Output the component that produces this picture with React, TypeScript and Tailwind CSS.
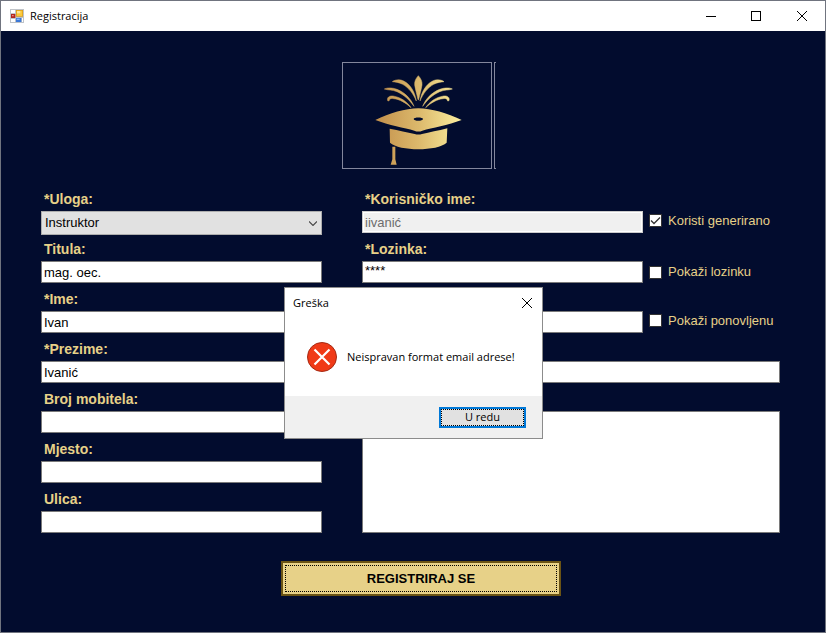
import { useState, type ReactNode } from "react";

const fieldClass =
  "block h-[22px] w-full rounded-none border border-[#7a7a7a] bg-white px-0.5 text-[13px] leading-4 text-black outline-none";

function Field({ id, label, children }: { id: string; label?: string; children: ReactNode }) {
  return (
    <div className="min-h-[50px]">
      <div className="h-5 pl-[3px]">
        {label && (
          <label htmlFor={id} className="block text-[14px] leading-4 font-bold text-[#e7d188]">
            {label}
          </label>
        )}
      </div>
      {children}
    </div>
  );
}

function Check({ id, label, initial = false }: { id: string; label: string; initial?: boolean }) {
  const [on, setOn] = useState(initial);
  return (
    <label htmlFor={id} className="flex flex-1 items-center gap-1.5 text-[13px] leading-4 whitespace-nowrap text-[#e7d188]">
      <span className="grid size-[13px] shrink-0">
        <input
          id={id}
          type="checkbox"
          checked={on}
          onChange={(e) => setOn(e.target.checked)}
          className="col-start-1 row-start-1 size-[13px] appearance-none border border-[#333333] bg-white"
        />
        {on && (
          <svg viewBox="0 0 13 13" className="pointer-events-none col-start-1 row-start-1 size-[13px]" fill="none" stroke="#333" strokeWidth="1.3">
            <path d="M2 6.5 5 9.5 11 3.5" />
          </svg>
        )}
      </span>
      {label}
    </label>
  );
}

function AppIcon() {
  return (
    <svg viewBox="0 0 42 42" className="size-3.5">
      <path d="M0 0h42v42H0z" fill="#bfc3c8" />
      <path d="M3 3h12v9H3zM3 30h12v9H3zM39 27v12h-3V27z" fill="#fff" />
      <path d="M3 15h13v12H3z" fill="#b3261e" />
      <path d="M6 18h5v4H6z" fill="#ef8a80" />
      <path d="M18 3h21v20H18z" fill="#d99a13" />
      <path d="M20 5h17v16H20z" fill="#fbc93b" />
      <path d="M21 6h10v7H21z" fill="#fde595" />
      <path d="M18 27h16v12H18z" fill="#3b78d8" />
      <path d="M20 29h9v4h-9z" fill="#8db8f5" />
    </svg>
  );
}

function Logo() {
  return (
    <svg viewBox="25 25 444 315" className="block h-[105px] w-[148px]" aria-label="Logo">
      <defs>
        <linearGradient id="gold" gradientUnits="userSpaceOnUse" x1="130" y1="0" x2="375" y2="0">
          <stop offset="0" stopColor="#c4924d" />
          <stop offset="0.5" stopColor="#dcb96c" />
          <stop offset="1" stopColor="#f9eb9c" />
        </linearGradient>
      </defs>
      <g fill="url(#gold)">
        <g stroke="url(#gold)" strokeWidth="1.5" strokeLinejoin="round">
          <path d="M251 63C243 72 239 80 240 91C242 106 247 119 250 135L252 135C255 119 260 106 262 91C263 80 259 72 251 63Z" />
          <path d="M173 81C181 75 195 73 207 79C229 90 241 114 245 139C236 117 222 99 204 89C193 83 181 82 173 81Z" />
          <path d="M328 81C320 75 306 73 294 79C272 90 260 114 256 139C265 117 279 99 297 89C308 83 320 82 328 81Z" />
          <path d="M149 103C158 98 174 99 187 104C211 114 229 132 238 155C225 136 208 120 187 111C173 105 160 107 149 103Z" />
          <path d="M353 103C344 98 328 99 315 104C291 114 273 132 264 155C277 136 294 120 315 111C329 105 342 107 353 103Z" />
          <path d="M159 138C156 128 164 123 175 124C199 128 217 141 229 159C213 144 195 134 177 132C166 130 165 134 163 139Z" />
          <path d="M343 138C346 128 338 123 327 124C303 128 285 141 273 159C289 144 307 134 325 132C336 130 337 134 339 139Z" />
        </g>
        <path
          fillRule="evenodd"
          d="M122 196C165 176 212 161 251 161C290 161 337 176 381 196C340 212 292 219 263 228Q251 233 239 228C210 219 162 212 122 196ZM237 193C237 200 265 200 265 193C265 187 237 187 237 193Z"
        />
        <path d="M165 222C193 227 217 233 240 238Q251 241 262 238C285 233 310 228 338 221L336 264C308 290 194 290 166 264Z" />
        <path d="M173 276H182V314L186 330H168L173 314Z" />
      </g>
    </svg>
  );
}

function CloseGlyph({ className }: { className: string }) {
  return (
    <svg viewBox="0 0 10 10" className={className} fill="none" stroke="#000" strokeWidth="1">
      <path d="M0 0 10 10M10 0 0 10" />
    </svg>
  );
}

function TitleBar() {
  return (
    <header className="flex h-[30px] items-center bg-white pl-[9px] text-black">
      <AppIcon />
      <h1 className="flex-1 pl-1.5 font-['Open_Sans','Noto_Sans',sans-serif] text-[11px] leading-4">Registracija</h1>
      <button type="button" aria-label="Minimiziraj" className="grid h-full w-11 place-items-center">
        <span className="h-px w-2.5 bg-black" />
      </button>
      <button type="button" aria-label="Maksimiziraj" className="grid h-full w-[46px] place-items-center">
        <span className="size-2.5 border border-black" />
      </button>
      <button type="button" aria-label="Zatvori" className="grid h-full w-[46px] place-items-center">
        <CloseGlyph className="size-2.5" />
      </button>
    </header>
  );
}

function ErrorDialog({ onClose }: { onClose: () => void }) {
  return (
    <div
      role="alertdialog"
      aria-labelledby="dialog-title"
      aria-describedby="dialog-text"
      className="absolute top-[286px] left-[283px] flex h-[152px] w-[259px] flex-col border border-[#8c8c8c] bg-white font-['Open_Sans','Noto_Sans',sans-serif] text-[11px] leading-4 text-black"
    >
      <div className="flex h-[30px] items-center justify-between pr-2.5 pl-2">
        <h2 id="dialog-title">Greška</h2>
        <button type="button" aria-label="Zatvori" onClick={onClose}>
          <CloseGlyph className="size-2.5" />
        </button>
      </div>
      <div className="flex flex-1 items-center gap-2.5 pl-[22px]">
        <svg viewBox="0 0 30 30" className="size-[30px]">
          <circle cx="15" cy="15" r="14.5" fill="#f03a17" stroke="#a52a14" />
          <path d="M7.5 7.5l15 15M22.5 7.5l-15 15" stroke="#fff" strokeWidth="2.2" />
        </svg>
        <p id="dialog-text">Neispravan format email adrese!</p>
      </div>
      <div className="flex h-[42px] items-center justify-end bg-[#f0f0f0] pr-4">
        <button type="button" onClick={onClose} className="h-[21px] w-[87px] border-2 border-[#0078d7] bg-[#e1e1e1]">
          <span className="flex h-full items-center justify-center border border-dotted border-black">U redu</span>
        </button>
      </div>
    </div>
  );
}

export default function App() {
  const [open, setOpen] = useState(true);
  return (
    <div className="relative flex min-h-screen flex-col border border-[#70747f] bg-[#020c2e] font-['Liberation_Sans',Arial,sans-serif]">
      <TitleBar />
      <main className="flex-1 pt-[31px] pb-9">
        <div className="flex justify-center gap-0.5 pl-3">
          <div className="border border-[#83879d]">
            <Logo />
          </div>
          <div className="w-0.5 border-y border-l border-[#83879d]" />
        </div>

        <form onSubmit={(e) => e.preventDefault()} className="pt-[22px]">
          <div className="grid grid-cols-[281fr_418fr] gap-10 pr-[45px] pl-10">
            <div>
              <Field id="uloga" label="*Uloga:">
                <div className="grid">
                  <select
                    id="uloga"
                    className="col-start-1 row-start-1 h-6 w-full appearance-none rounded-none border border-[#adadad] bg-[#e1e1e1] px-[3px] text-[13px] leading-4 text-black outline-none"
                  >
                    <option>Instruktor</option>
                  </select>
                  <svg
                    viewBox="0 0 8 5"
                    className="pointer-events-none col-start-1 row-start-1 mr-[5px] h-[5px] w-2 self-center justify-self-end"
                    fill="none"
                    stroke="#444"
                    strokeWidth="1.1"
                  >
                    <path d="M0 .5 4 4.5 8 .5" />
                  </svg>
                </div>
              </Field>
              <Field id="titula" label="Titula:">
                <input id="titula" defaultValue="mag. oec." className={fieldClass} />
              </Field>
              <Field id="ime" label="*Ime:">
                <input id="ime" defaultValue="Ivan" className={fieldClass} />
              </Field>
              <Field id="prezime" label="*Prezime:">
                <input id="prezime" defaultValue="Ivanić" className={fieldClass} />
              </Field>
              <Field id="mobitel" label="Broj mobitela:">
                <input id="mobitel" className={fieldClass} />
              </Field>
              <Field id="mjesto" label="Mjesto:">
                <input id="mjesto" className={fieldClass} />
              </Field>
              <Field id="ulica" label="Ulica:">
                <input id="ulica" className={fieldClass} />
              </Field>
            </div>

            <div>
              <Field id="korime" label="*Korisničko ime:">
                <div className="flex items-start gap-1.5">
                  <div className="w-[281px]">
                    <input
                      id="korime"
                      disabled
                      defaultValue="iivanić"
                      className="block h-[22px] w-full rounded-none border border-[#cccccc] bg-[#f0f0f0] px-0.5 text-[13px] leading-4 text-[#6d6d6d] inset-ring inset-ring-white"
                    />
                  </div>
                  <div className="flex h-[19px] flex-1">
                    <Check id="generirano" label="Koristi generirano" initial />
                  </div>
                </div>
              </Field>
              <Field id="lozinka" label="*Lozinka:">
                <div className="flex items-center gap-1.5">
                  <div className="w-[281px]">
                    <input id="lozinka" defaultValue="****" className={`${fieldClass} pb-1`} />
                  </div>
                  <Check id="pokazi" label="Pokaži lozinku" />
                </div>
              </Field>
              <Field id="ponovljena">
                <div className="flex items-start gap-1.5">
                  <div className="w-[281px]">
                    <input id="ponovljena" aria-label="Ponovljena lozinka" className={fieldClass} />
                  </div>
                  <div className="flex h-[19px] flex-1">
                    <Check id="pokazi-ponovljenu" label="Pokaži ponovljenu" />
                  </div>
                </div>
              </Field>
              <Field id="email">
                <input id="email" aria-label="Email" className={fieldClass} />
              </Field>
              <Field id="opis">
                <textarea
                  id="opis"
                  aria-label="Opis"
                  className="block h-[122px] w-full resize-none rounded-none border border-[#7a7a7a] bg-white px-0.5 text-[13px] leading-4 text-black outline-none"
                />
              </Field>
            </div>
          </div>

          <div className="flex justify-center pt-5 pl-4">
            <button type="submit" className="h-[35px] w-[280px] border-2 border-[#6b5414] bg-[#e7d188] p-0.5 text-[13px] leading-4 font-bold text-black">
              <span className="flex h-full items-center justify-center border border-dotted border-black">REGISTRIRAJ SE</span>
            </button>
          </div>
        </form>
      </main>
      {open && <ErrorDialog onClose={() => setOpen(false)} />}
    </div>
  );
}
